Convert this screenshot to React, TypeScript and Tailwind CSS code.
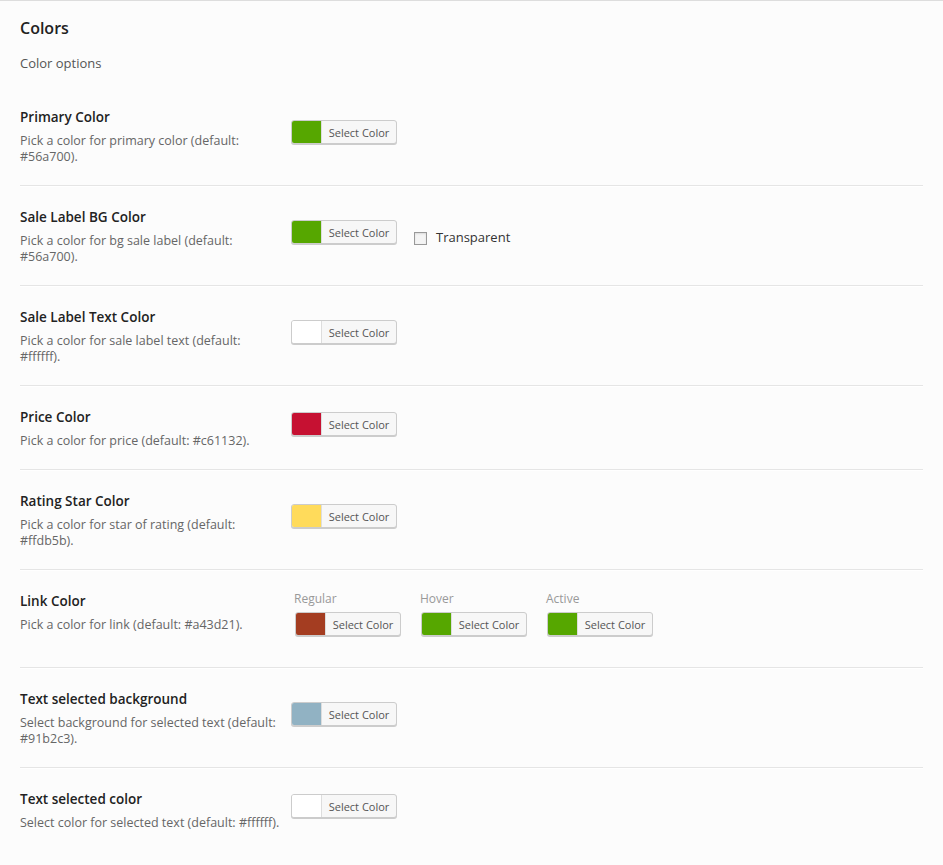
import React from "react";

const font = { fontFamily: '"Open Sans", "Noto Sans", sans-serif' };

function ColorButton({ color }: { color: string }) {
  return (
    <div className="flex h-[24px] w-[106px] rounded-[3px] border border-[#cccccc] bg-[#f7f7f7] shadow-[0_1px_0_#cccccc] overflow-hidden">
      <div className="h-full w-[30px] border-r border-[#dddddd]" style={{ backgroundColor: color }} />
      <div className="flex-1 flex items-center justify-center text-[11px] text-[#555555] leading-none">Select Color</div>
    </div>
  );
}

type Row = {
  title: string;
  desc: React.ReactNode;
  color?: string;
  transparent?: boolean;
  link?: boolean;
};

const rows: Row[] = [
  { title: "Primary Color", desc: <>Pick a color for primary color (default:<br />#56a700).</>, color: "#56a700" },
  { title: "Sale Label BG Color", desc: <>Pick a color for bg sale label (default:<br />#56a700).</>, color: "#56a700", transparent: true },
  { title: "Sale Label Text Color", desc: <>Pick a color for sale label text (default:<br />#ffffff).</>, color: "#ffffff" },
  { title: "Price Color", desc: <>Pick a color for price (default: #c61132).</>, color: "#c61132" },
  { title: "Rating Star Color", desc: <>Pick a color for star of rating (default:<br />#ffdb5b).</>, color: "#ffdb5b" },
  { title: "Link Color", desc: <>Pick a color for link (default: #a43d21).</>, link: true },
  { title: "Text selected background", desc: <>Select background for selected text (default:<br />#91b2c3).</>, color: "#91b2c3" },
  { title: "Text selected color", desc: <>Select color for selected text (default: #ffffff).</>, color: "#ffffff" },
];

export default function App() {
  return (
    <div className="min-h-[865px] w-[943px] bg-[#fcfcfc] border-t border-[#dddddd]" style={font}>
      <div className="px-[20px]">
        <h2 className="pt-[15px] text-[16px] font-semibold text-[#222222] leading-[24px]">Colors</h2>
        <p className="mt-[13px] text-[13px] text-[#555555] leading-[20px]">Color options</p>
        <div className="mt-[13px] w-[903px]">
          {rows.map((r, i) => (
            <div
              key={i}
              className={`flex ${r.link ? "items-start pb-[31px]" : "items-center pb-[20px]"} pt-[21px] ${i < rows.length - 1 ? "border-b border-[#e5e5e5] shadow-[0_1px_0_#ffffff]" : ""}`}
            >
              <div className="w-[271px] shrink-0">
                <div className="text-[13.5px] font-semibold text-[#222222] leading-[20px]">{r.title}</div>
                <div className="mt-[6px] text-[12.5px] text-[#666666] leading-[16px]">{r.desc}</div>
              </div>
              {r.link ? (
                <div className="flex gap-[20px] pl-[4px]">
                  {[
                    ["Regular", "#a43d21"],
                    ["Hover", "#56a700"],
                    ["Active", "#56a700"],
                  ].map(([l, c]) => (
                    <div key={l}>
                      <div className="text-[12px] text-[#999999] leading-[16px] -ml-[1px]">{l}</div>
                      <div className="mt-[5px]">
                        <ColorButton color={c} />
                      </div>
                    </div>
                  ))}
                </div>
              ) : (
                <div className="flex items-center mb-[8px]">
                  <ColorButton color={r.color!} />
                  {r.transparent && (
                    <label className="ml-[17px] mt-[12px] flex items-center gap-[9px] text-[13px] text-[#333333]">
                      <span className="block h-[13px] w-[13px] border border-[#999999] bg-[#f4f4f4] shadow-[inset_0_1px_2px_rgba(0,0,0,0.1)]" />
                      Transparent
                    </label>
                  )}
                </div>
              )}
            </div>
          ))}
        </div>
      </div>
    </div>
  );
}
